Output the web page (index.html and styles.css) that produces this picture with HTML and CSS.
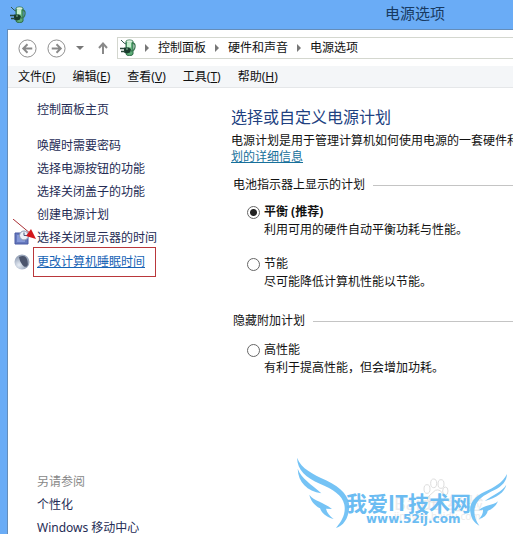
FILE: index.html
```html
<!DOCTYPE html>
<html lang="zh-CN">
<head>
<meta charset="utf-8">
<title>电源选项</title>
<link rel="stylesheet" href="styles.css">
</head>
<body>
<svg class="defs" aria-hidden="true">
  <symbol id="plug" viewBox="0 0 16 18">
    <path d="M6 2.500Q6 1 9.500 1T13 2.500V15Q13 16.500 9.500 16.500T6 15Z" fill="#5fae78" stroke="#2d6c48"/>
    <path d="M7 3.500h4v5H7z" fill="#c5efcf"/>
    <ellipse cx="9.500" cy="2.500" rx="3" ry="1.300" fill="#d9eedc"/>
    <path d="M12 4q3.500 0 3 4t-4 4" fill="none" stroke="#397951" stroke-width="1.300"/>
    <path d="M1 1l3 3 2 1" fill="none" stroke="#31594b"/>
    <path d="M4 8.500h5l2 2-1 3-3 1-3-1z" fill="#193c2d"/>
    <path d="M0 9.500h4M1 12.500h4" stroke="#29483b" stroke-width="1.300"/>
    <path d="M6 10h2" stroke="#82b494"/>
  </symbol>
</svg>
<div class="window">
  <header class="titlebar">
    <svg class="plug" aria-hidden="true"><use href="#plug"/></svg>
    <h1>电源选项</h1>
  </header>
  <div class="client">
    <nav class="navbar">
      <button class="round" aria-label="后退"><svg viewBox="0 0 20 20"><circle cx="10" cy="10" r="9"/><path class="bold" d="M15 10H6M10 5.500L5.500 10l4.500 4.500"/></svg></button>
      <button class="round" aria-label="前进"><svg viewBox="0 0 20 20"><circle cx="10" cy="10" r="9"/><path class="bold" d="M5 10h9M10 5.500l4.500 4.500-4.500 4.500"/></svg></button>
      <button class="recent" aria-label="最近位置"><svg viewBox="0 0 8 4"><path d="M0 0h8L4 4z"/></svg></button>
      <button class="up" aria-label="向上"><svg viewBox="0 0 10 12"><path class="bold" d="M5 12V1.500M1 6l4-4.500L9 6"/></svg></button>
      <div class="address">
        <svg class="plug" aria-hidden="true"><use href="#plug"/></svg>
        <i class="chevron"></i><a href="#">控制面板</a>
        <i class="chevron"></i><a href="#">硬件和声音</a>
        <i class="chevron"></i><a href="#">电源选项</a>
      </div>
    </nav>
    <div class="menubar">
      <button>文件(<u>F</u>)</button>
      <button>编辑(<u>E</u>)</button>
      <button>查看(<u>V</u>)</button>
      <button>工具(<u>T</u>)</button>
      <button>帮助(<u>H</u>)</button>
    </div>
    <div class="content">
      <aside class="sidebar">
        <div class="tasks">
          <a class="home" href="#">控制面板主页</a>
          <a href="#">唤醒时需要密码</a>
          <a href="#">选择电源按钮的功能</a>
          <a href="#">选择关闭盖子的功能</a>
          <a href="#">创建电源计划</a>
          <a class="with-icon" href="#">
            <svg class="task-icon" viewBox="0 0 16 16" aria-hidden="true"><path d="M1 3h13v11H1z" fill="#6578bd" stroke="#4a5ba3"/><path d="M3 5h8v7H3z" fill="#8598d8"/><circle cx="10" cy="5.500" r="4.500" fill="#edf0f7" stroke="#8995b0"/><path d="M10 2.500v3h3" fill="none" stroke="#4c5b7d"/></svg>
            选择关闭显示器的时间
            <svg class="pointer" viewBox="0 0 24 21" aria-hidden="true"><path d="M0 0l18 15" stroke="#a92f35"/><path d="M23 20l-10-3 5-7z" fill="#d3161b"/></svg>
          </a>
          <a class="with-icon current" href="#">
            <svg class="task-icon" viewBox="0 0 16 16" aria-hidden="true"><defs><radialGradient id="moon" cx=".3" cy=".7"><stop offset="0" stop-color="#e8eef6"/><stop offset="1" stop-color="#9aa6bb"/></radialGradient></defs><circle cx="8" cy="8" r="7.500" fill="url(#moon)"/><path d="M5 3Q12 0 13.500 7T10 12.500Q6 9 5 3z" fill="#4b546c"/></svg>
            <span>更改计算机睡眠时间</span>
          </a>
        </div>
        <div class="related">
          <h2>另请参阅</h2>
          <a href="#">个性化</a>
          <a href="#">Windows 移动中心</a>
        </div>
      </aside>
      <main class="main">
        <h2>选择或自定义电源计划</h2>
        <p class="intro">电源计划是用于管理计算机如何使用电源的一套硬件和<br><a href="#">划的详细信息</a></p>
        <section class="group">
          <h3>电池指示器上显示的计划</h3>
          <div class="plan">
            <input type="radio" name="plan" id="balanced" checked>
            <label for="balanced"><strong>平衡 (推荐)</strong></label>
            <p>利用可用的硬件自动平衡功耗与性能。</p>
          </div>
          <div class="plan">
            <input type="radio" name="plan" id="saver">
            <label for="saver">节能</label>
            <p>尽可能降低计算机性能以节能。</p>
          </div>
        </section>
        <section class="group">
          <h3>隐藏附加计划</h3>
          <div class="plan">
            <input type="radio" name="plan" id="high">
            <label for="high">高性能</label>
            <p>有利于提高性能，但会增加功耗。</p>
          </div>
        </section>
      </main>
    </div>
  </div>
  <div class="watermark">
    <span class="faint brand">Baidu 经验</span>
    <span class="faint domain">jingyan.baidu.com</span>
    <svg class="wings" viewBox="0 0 669 282" aria-hidden="true">
      <g fill="none" stroke="#dedede" stroke-width="3"><ellipse cx="411" cy="147" rx="9" ry="13"/><ellipse cx="431" cy="130" rx="9" ry="13"/><ellipse cx="453" cy="132" rx="9" ry="13"/><ellipse cx="466" cy="153" rx="8" ry="12"/><path d="M436 151q16-6 25 16t-12 19h-24q-22-3-8-18z"/></g>
      <g fill="#75c3f5">
        <path d="M21 53C35 87 67 101 108 121C157 144 178 171 178 202C175 237 160 257 138 264C157 241 168 220 163 194C157 165 128 148 91 132C45 111 23 91 21 53Z"/>
        <path d="M23 86C34 116 64 132 94 160C51 152 25 128 23 86Z"/>
        <path d="M58 164C72 183 99 185 126 207L108 206C111 218 119 228 131 237C109 232 95 219 90 205C73 196 62 182 58 164Z"/>
        <path d="M651 102C638 128 615 141 584 155C551 171 537 192 541 216C544 236 552 248 568 257C551 233 549 208 560 189C570 172 590 162 612 151C638 138 650 123 651 102Z"/>
        <path d="M649 134C644 157 620 173 584 183C608 165 634 157 649 134Z"/>
        <path d="M624 184C615 204 602 208 593 213C591 225 580 234 567 237C575 228 580 220 579 209L566 211C583 194 609 198 624 184Z"/>
      </g>
    </svg>
    <span class="site">我爱IT技术网</span>
    <span class="url">www.52ij.com</span>
  </div>
</div>
</body>
</html>
```
FILE: styles.css
```css
* { box-sizing: border-box; }
body {
  margin: 0;
  background: #fff;
  color: #111;
  font: 12px/16px "Noto Sans", "Noto Sans CJK SC", sans-serif;
}
h1, h2, h3, p { margin: 0; font-weight: 400; }
a { color: inherit; text-decoration: none; }
button { padding: 0; border: 0; background: none; font: inherit; color: inherit; }
.defs { position: absolute; width: 0; height: 0; }
.window {
  position: relative;
  display: flex;
  flex-direction: column;
  min-height: 100vh;
  overflow: hidden;
  background: #6aacf6;
}
.titlebar {
  display: flex;
  align-items: center;
  height: 29px;
  padding-left: 10px;
}
.plug { flex: none; width: 16px; height: 18px; }
.titlebar h1 {
  padding-left: 359px;
  color: #183a61;
  font-size: 15px;
  line-height: 24px;
  padding-bottom: 4px;
  white-space: nowrap;
}
.client {
  flex: 1;
  display: flex;
  flex-direction: column;
  margin-left: 7px;
  border-top: 1px solid #658db9;
  border-left: 1px solid #658db9;
  background: #fff;
}
.navbar {
  display: flex;
  align-items: center;
  height: 36px;
  padding-left: 10px;
}
.navbar button svg {
  display: block;
  width: 100%;
  height: 100%;
  fill: none;
  stroke: #898989;
}
.navbar .bold { stroke-width: 2; }
.round { width: 19px; height: 19px; margin-right: 10px; }
.recent { width: 8px; height: 4px; }
.navbar .recent svg { fill: #777; stroke: none; }
.up { width: 10px; height: 12px; margin: 0 12px 0 14px; }
.navbar .address { margin-left: -3px; }
.address {
  flex: 1;
  display: flex;
  align-items: center;
  height: 22px;
  padding-left: 2px;
  border: 1px solid #d4d7cf;
  border-right: 0;
  white-space: nowrap;
}
.chevron {
  margin: 0 9px;
  border: 4px solid transparent;
  border-left-color: #777;
  border-right-width: 0;
}
.menubar {
  display: flex;
  gap: 17px;
  height: 22px;
  padding-left: 10px;
  border-bottom: 1px solid #e5e7e9;
  background: #f4f6f8;
}
.content { flex: 1; display: flex; }
.sidebar {
  flex: none;
  display: flex;
  flex-direction: column;
  justify-content: space-between;
  width: 223px;
  padding: 10px 0 0 29px;
  color: #252c55;
  line-height: 23px;
}
.sidebar h2 { color: #888; font-size: 12px; line-height: 23px; }
.sidebar a { display: block; }
.sidebar .home { margin-bottom: 13px; }
.related { margin-bottom: -5px; }
.with-icon { position: relative; }
.task-icon { position: absolute; top: 4px; left: -23px; width: 16px; height: 16px; }
.pointer { position: absolute; top: -7px; left: -24px; width: 24px; height: 21px; }
.current span {
  display: inline-block;
  margin-left: -4px;
  padding: 0 10px 0 3px;
  border: 1px solid #b9373b;
  line-height: 28px;
  color: #1763b5;
  text-decoration: underline;
}
.current .task-icon { top: 7px; }
.current { margin-top: -2px; }
.main { flex: 1; min-width: 0; padding-top: 17px; }
.main h2 { color: #204080; font-size: 16px; line-height: 24px; white-space: nowrap; }
.intro { margin-top: 4px; white-space: nowrap; }
.intro a { color: #17709b; text-decoration: underline; }
.group { margin: 12px 0 22px 2px; }
.group h3 {
  display: flex;
  align-items: center;
  gap: 8px;
  margin-bottom: 10px;
  font-size: 12px;
  line-height: 16px;
}
.group + .group h3 { margin-bottom: 12px; }
.group h3::after { content: ""; flex: 1; height: 1px; background: #c4c4c4; }
.plan {
  display: grid;
  grid-template-columns: 13px auto;
  align-items: center;
  column-gap: 4px;
  margin-bottom: 16px;
  padding-left: 14px;
  line-height: 18px;
  white-space: nowrap;
}
.plan p { grid-column: 2; }
.plan input {
  appearance: none;
  width: 13px;
  height: 13px;
  margin: 0;
  border: 1px solid #666;
  border-radius: 50%;
  background: #fff;
}
.plan input:checked { background: radial-gradient(circle, #222 3px, #fff 4px); }
.watermark {
  position: absolute;
  right: 0;
  bottom: 0;
  width: 223px;
  height: 94px;
  color: #6bbcf2;
  white-space: nowrap;
}
.wings { position: relative; display: block; width: 223px; height: 94px; }
.watermark span { position: absolute; }
.site { left: 56px; top: 49px; font: 700 21px/26px "Noto Sans CJK SC", sans-serif; }
.url { left: 76px; top: 72px; font: 700 12px/14px "DejaVu Sans", sans-serif; }
.watermark .faint { color: #ebebeb; }
.brand { left: 104px; top: 52px; font-size: 18px; line-height: 22px; }
.domain { left: 104px; top: 70px; font-size: 10px; line-height: 12px; }
```
